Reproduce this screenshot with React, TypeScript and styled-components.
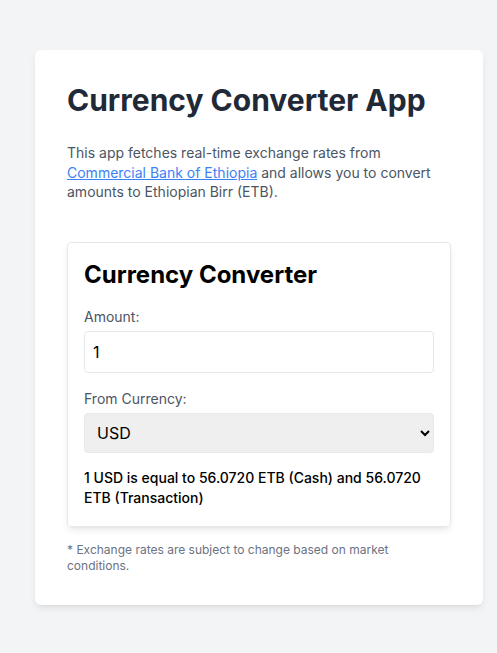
import React, { useState } from 'react'
import styled, { createGlobalStyle } from 'styled-components'

const GlobalStyle = createGlobalStyle`
  html, body {
    margin: 0;
    padding: 0;
    background: #f3f4f6;
    font-family: Inter, 'Noto Sans', sans-serif;
  }
`

const Page = styled.div`
  padding: 50px 14px 48px 35px;
`

const Card = styled.main`
  background: #fff;
  border-radius: 6px;
  box-shadow: 0 4px 8px -2px rgba(0, 0, 0, 0.1), 0 2px 4px -2px rgba(0, 0, 0, 0.06);
  padding: 32px 32px 31px;
`

const Title = styled.h1`
  margin: 0;
  font-size: 30px;
  line-height: 36px;
  font-weight: 700;
  color: #1f2937;
`

const Intro = styled.p`
  margin: 25px 0 0;
  font-size: 14px;
  line-height: 19.5px;
  color: #4b5563;
`

const Link = styled.a`
  color: #3b82f6;
  text-decoration: underline;
`

const Converter = styled.section`
  margin-top: 40px;
  border: 1px solid #e5e7eb;
  border-radius: 4px;
  box-shadow: 0 4px 8px -2px rgba(0, 0, 0, 0.1), 0 2px 4px -2px rgba(0, 0, 0, 0.06);
  padding: 16px 16px 18px;
`

const ConverterTitle = styled.h2`
  margin: 0;
  font-size: 24px;
  line-height: 32px;
  font-weight: 700;
  color: #000;
`

const Field = styled.div<{ $top: number }>`
  display: flex;
  flex-direction: column;
  margin-top: ${({ $top }) => $top}px;
`

const Label = styled.label`
  font-size: 14px;
  line-height: 20px;
  color: #4b5563;
  margin-bottom: 4px;
`

const Input = styled.input`
  box-sizing: border-box;
  height: 42px;
  padding: 0 8px;
  border: 1px solid #e5e7eb;
  border-radius: 4px;
  font-family: Inter, sans-serif;
  font-size: 16px;
  color: #000;
  outline: none;
`

const Select = styled.select`
  box-sizing: border-box;
  height: 40px;
  padding: 0 8px;
  border: 1px solid #e9e9e9;
  border-radius: 4px;
  background: #efefef;
  font-family: Inter, sans-serif;
  font-size: 16px;
  color: #000;
  outline: none;
`

const Result = styled.p`
  margin: 15px 0 0;
  font-size: 14px;
  line-height: 20px;
  font-weight: 500;
  color: #000;
`

const Note = styled.p`
  margin: 15px 0 0;
  font-size: 12px;
  line-height: 16px;
  color: #6b7280;
`

const rates: Record<string, { cash: number; transaction: number }> = {
  USD: { cash: 56.072, transaction: 56.072 },
  EUR: { cash: 60.5123, transaction: 60.5123 },
  GBP: { cash: 70.8811, transaction: 70.8811 },
}

const App = () => {
  const [amount, setAmount] = useState('1')
  const [currency, setCurrency] = useState('USD')
  const rate = rates[currency]
  const value = Number(amount) || 0

  return (
    <>
      <GlobalStyle />
      <Page>
        <Card>
          <Title>Currency Converter App</Title>
          <Intro>
            This app fetches real-time exchange rates from{' '}
            <Link href="#">Commercial Bank of Ethiopia</Link> and allows you to convert
            amounts to Ethiopian Birr (ETB).
          </Intro>
          <Converter>
            <ConverterTitle>Currency Converter</ConverterTitle>
            <Field $top={16}>
              <Label htmlFor="amount">Amount:</Label>
              <Input id="amount" value={amount} onChange={(e) => setAmount(e.target.value)} />
            </Field>
            <Field $top={16}>
              <Label htmlFor="currency">From Currency:</Label>
              <Select id="currency" value={currency} onChange={(e) => setCurrency(e.target.value)}>
                {Object.keys(rates).map((c) => (
                  <option key={c} value={c}>
                    {c}
                  </option>
                ))}
              </Select>
            </Field>
            <Result>
              {value} {currency} is equal to {(value * rate.cash).toFixed(4)} ETB (Cash) and{' '}
              {(value * rate.transaction).toFixed(4)} ETB (Transaction)
            </Result>
          </Converter>
          <Note>* Exchange rates are subject to change based on market conditions.</Note>
        </Card>
      </Page>
    </>
  )
}

export default App
